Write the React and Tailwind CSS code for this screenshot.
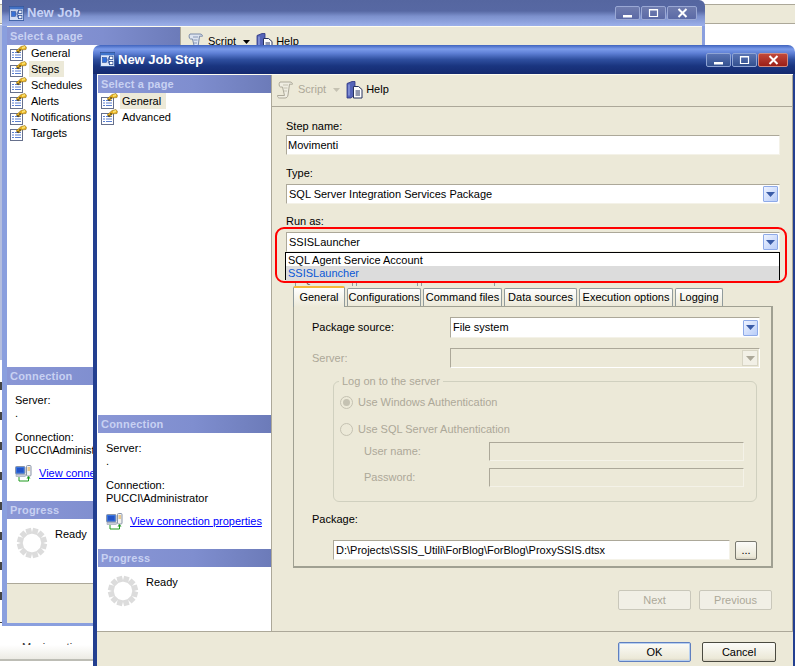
function PageIcon() {
  return (
    <svg width="17" height="16" viewBox="0 0 17 16" className="shrink-0">
      <rect x="0.5" y="4.5" width="12" height="11" fill="#fff" stroke="#66708c" />
      <path d="M2 7.5h2M5 7.5h6M2 10h2M5 10h6M2 12.5h2M5 12.5h6" stroke="#5a7fd0" />
      <path d="M6 6 L11 1.5 L15 0.5 L16.5 2.5 L16 4.5 L11 5 L9 8 Z" fill="#e8b020" stroke="#8a6a10" strokeWidth="0.5" />
      <path d="M7 7l1-1 1 1-1 1zM9 5l1-1 1 1-1 1z" fill="#222" />
      <path d="M12 2l3-1v2l-3 1z" fill="#f8e070" />
    </svg>
  );
}

function WindowIcon({ dim }) {
  return (
    <svg width="15" height="15" viewBox="0 0 18 16" preserveAspectRatio="none" className="shrink-0" opacity={dim ? 0.85 : 1}>
      <rect x="0.5" y="0.5" width="17" height="15" fill="#dfe8fa" stroke="#31569c" />
      <rect x="1" y="1" width="16" height="2.5" fill="#3f74cc" />
      <rect x="3" y="6" width="5" height="5" fill="#2f6fdc" stroke="#1b3f8c" strokeWidth="0.6" />
      <rect x="11.5" y="4.5" width="4" height="3.5" fill="#fff" stroke="#1b3f8c" strokeWidth="0.8" />
      <rect x="11.5" y="10" width="4" height="3.5" fill="#fff" stroke="#1b3f8c" strokeWidth="0.8" />
      <path d="M8 8.5h2V6.2h1.5M10 8.5v3.3h1.5" fill="none" stroke="#1b3f8c" strokeWidth="0.8" />
    </svg>
  );
}

function ScrollIcon({ disabled }) {
  return (
    <svg width="17" height="18" viewBox="0 0 17 18" className="shrink-0">
      <path d="M3 1h10c1.5 0 2.5 1 2.5 2.2H12.5L11 14c-.2 2-1.5 3-3 3H2.5C1 17 .5 15.8 .5 14.5H7.5L5.5 6H3.5C2 6 1.5 2 3 1z"
        fill={disabled ? "#efede2" : "#dde4f0"} stroke={disabled ? "#aca899" : "#7a8aa8"} strokeWidth="1" />
      <path d="M6 4h5M6.5 7h4M7 10h3" stroke={disabled ? "#c5c2b2" : "#8a9ab8"} />
    </svg>
  );
}

function HelpIcon() {
  return (
    <svg width="17" height="18" viewBox="0 0 17 18" className="shrink-0">
      <path d="M1 2.5L6 .5h3v13l-4 3.5H1z" fill="#5564b8" stroke="#2b3380" strokeWidth="0.8" />
      <path d="M3 3.5v11" stroke="#a5b2ec" />
      <path d="M7.5 5.5h5l3.5 3V17H7.5z" fill="#fff" stroke="#27335f" />
      <path d="M9.5 10h4.5M9.5 12h4.5M9.5 14h4.5" stroke="#27335f" />
    </svg>
  );
}

function ConnIcon() {
  return (
    <svg width="17" height="17" viewBox="0 0 17 17" className="shrink-0">
      <rect x="0.5" y="1.5" width="9.5" height="7.5" rx="1" fill="#3a76e0" stroke="#8a94a8" />
      <rect x="2" y="3" width="6.5" height="4.5" fill="#2354c8" />
      <rect x="1" y="9.5" width="9.5" height="2" fill="#c8ccd6" stroke="#8a94a8" strokeWidth="0.5" />
      <rect x="11.5" y="0.5" width="4.5" height="10.5" rx="1" fill="#f2f2f0" stroke="#8a94a8" />
      <path d="M12.5 3h2.5M12.5 5h2.5" stroke="#e0a030" />
      <path d="M4 12v4h9.5v-3" fill="none" stroke="#1f9a1f" />
      <path d="M11.5 13.5h4L13.5 11z" fill="#1f9a1f" />
    </svg>
  );
}

function Spinner() {
  const segs = Array.from({ length: 12 }, (_, i) => i);
  return (
    <svg width="32" height="32" viewBox="-16 -16 32 32" className="shrink-0">
      {segs.map((i) => (
        <rect key={i} x="-2.8" y="-15" width="5.6" height="6" fill="#dcdcdc" transform={`rotate(${i * 30 + 15})`} />
      ))}
    </svg>
  );
}

function TitleButton({ kind, dim }) {
  const w = kind === "close" ? "w-[30px]" : "w-[25px]";
  const bg = kind === "close"
    ? dim
      ? "bg-[linear-gradient(180deg,#6f7cae,#5b6aa6)] border-[#9aa8d4]"
      : "bg-[linear-gradient(180deg,#c2483a,#9c1f18)] border-[#d08a80]"
    : dim
      ? "bg-[linear-gradient(180deg,#6f7cae,#5b6aa6)] border-[#9aa8d4]"
      : "bg-[linear-gradient(180deg,#5a74b4,#33508f)] border-[#8fa4d4]";
  return (
    <div className={`${w} h-[14px] border rounded-[2px] flex items-center justify-center ${bg}`}>
      <svg width="11" height="10" viewBox="0 0 11 10">
        {kind === "min" && <rect x="1" y="7" width="9" height="2.5" fill="#fff" />}
        {kind === "max" && <path d="M1.5 1.5h8v7h-8z M1 2h9" fill="none" stroke="#fff" strokeWidth="1.2" />}
        {kind === "close" && <path d="M1.5 1l8 8M9.5 1l-8 8" stroke="#fff" strokeWidth="2" />}
      </svg>
    </div>
  );
}

function TitleBar({ title, dim }) {
  return (
    <div
      className={
        dim
          ? "h-[26px] shrink-0 flex items-center pl-[7px] pr-[8px] bg-[linear-gradient(180deg,#5566a0_0%,#5768a3_42%,#7c90cc_62%,#9cb0ea_100%)]"
          : "h-[29px] shrink-0 flex items-center pl-[7px] pr-[7px] bg-[linear-gradient(180deg,#3f63bd_0%,#7b9bea_14%,#5f80d6_28%,#2f4f9f_50%,#1a3580_72%,#14296f_100%)]"
      }
    >
      <WindowIcon dim={dim} />
      <span className={`ml-[3px] text-[13px] font-bold ${dim ? "text-[#c6d2f6]" : "text-white"}`}>{title}</span>
      <div className="ml-auto flex gap-px">
        <TitleButton kind="min" dim={dim} />
        <TitleButton kind="max" dim={dim} />
        <TitleButton kind="close" dim={dim} />
      </div>
    </div>
  );
}

function SideHeader({ children }) {
  return (
    <div className="h-[18px] shrink-0 flex items-center pl-[3px] text-[11px] font-bold tracking-[0.2px] text-[#c8d1f2] bg-[linear-gradient(90deg,#8a97d6_0%,#7f8ecf_55%,#6c7bb9_100%)]">
      {children}
    </div>
  );
}

function SidePanel({ pages, selected, frame }) {
  return (
    <div className={`shrink-0 flex flex-col bg-white border-r border-[#aca899] overflow-hidden ${frame}`}>
      <SideHeader>Select a page</SideHeader>
      <div className="flex-1">
        {pages.map((p) => (
          <div key={p} className="h-4 flex items-center pl-[3px]">
            <PageIcon />
            <span className={`ml-[2px] pl-[2px] pr-[5px] h-4 leading-4 whitespace-nowrap ${p === selected ? "bg-[#ece9d8]" : ""}`}>{p}</span>
          </div>
        ))}
      </div>
      <SideHeader>Connection</SideHeader>
      <div className="h-[116px] shrink-0 pt-[9px] pl-2 leading-[13px] whitespace-nowrap">
        <div>Server:</div>
        <div>.</div>
        <div className="mt-[11px]">Connection:</div>
        <div>PUCCI\Administrator</div>
        <div className="mt-[8px] flex items-center">
          <ConnIcon />
          <span className="ml-[7px] text-[#0000ff] underline">View connection properties</span>
        </div>
      </div>
      <SideHeader>Progress</SideHeader>
      <div className="h-[64px] shrink-0 flex pl-[9px] pt-[8px]">
        <Spinner />
        <span className="ml-[7px] mt-[1px] leading-[13px]">Ready</span>
      </div>
    </div>
  );
}

function Toolbar({ disabled, pl }) {
  return (
    <div className={`h-[32px] pb-[2px] shrink-0 flex items-center border-b border-[#aca899] ${pl}`}>
      <ScrollIcon disabled={disabled} />
      <span className={`ml-[4px] ${disabled ? "text-[#aca899]" : "text-black"}`}>Script</span>
      <svg width="7" height="4" viewBox="0 0 7 4" className="ml-[7px]">
        <path d="M0 0h7L3.5 4z" fill={disabled ? "#c5c2b2" : "#000"} />
      </svg>
      <span className="ml-[6px]"><HelpIcon /></span>
      <span className="ml-[3px]">Help</span>
    </div>
  );
}

const INPUT = "border border-[#f4f2e8] border-t-[#aca899] border-l-[#aca899]";

function Combo({ text, w, h, disabled }) {
  return (
    <div className={`${w} ${h} ${INPUT} ${disabled ? "bg-[#ece9d8] border-white" : "bg-white"} flex items-center pl-[2px] pr-[1px]`}>
      <span className="flex-1 whitespace-nowrap overflow-hidden">{text}</span>
      <div
        className={
          disabled
            ? "w-[16px] h-[16px] flex items-center justify-center bg-[#f2f0e6] border border-[#d8d5c5]"
            : "w-[15px] h-[16px] flex items-center justify-center bg-[linear-gradient(135deg,#eef3ff,#b9cdf8)] border border-[#8eaae8] rounded-[1px]"
        }
      >
        <svg width="9" height="5" viewBox="0 0 9 5">
          <path d="M0 0h9L4.5 5z" fill={disabled ? "#aca899" : "#3a5ca8"} />
        </svg>
      </div>
    </div>
  );
}

function Tab({ children, active, w }) {
  return (
    <div
      className={
        active
          ? `${w} h-[21px] -mb-px z-10 flex items-center justify-center rounded-t-[2px] border-x border-[#919b9c] border-t-2 border-t-[#f6b93a] bg-[linear-gradient(180deg,#ffffff,#ece9d8)] whitespace-nowrap`
          : `${w} h-[18px] flex items-center justify-center rounded-t-[2px] border border-b-0 border-[#919b9c] bg-[linear-gradient(180deg,#ffffff,#ece9d8)] whitespace-nowrap`
      }
    >
      {children}
    </div>
  );
}

function GhostTab({ children, w }) {
  return (
    <div className={`${w} h-[6px] border-x border-[#919b9c] flex items-end justify-center overflow-hidden whitespace-nowrap`}>
      <span className="leading-[13px] shrink-0">{children}</span>
    </div>
  );
}

function Radio({ checked }) {
  return (
    <div className="w-[13px] h-[13px] rounded-full border border-[#c5c2b2] bg-[#ece9d8] flex items-center justify-center shrink-0">
      {checked && <div className="w-[7px] h-[7px] rounded-full bg-[#c5c2b2]" />}
    </div>
  );
}

function XpButton({ children, w, disabled, isDefault }) {
  const cls = disabled
    ? "border-[#c9c7ba] text-[#aca899] bg-[#f1efe6]"
    : isDefault
      ? "border-[#5f7fc0] shadow-[inset_0_0_0_1px_#b8d0f0] bg-[linear-gradient(180deg,#fbfbf8,#ece9d8_85%,#d6d0c0)]"
      : "border-[#4a4a40] bg-[linear-gradient(180deg,#fbfbf8,#ece9d8_85%,#d6d0c0)]";
  return <div className={`${w} h-[20px] rounded-[2px] border flex items-center justify-center ${cls}`}>{children}</div>;
}

function TabPanel() {
  return (
    <div className="ml-[21px] w-[480px] h-[262px] border border-[#a0a092] border-r-2 border-b-2 pt-[10px] pl-[18px]">
      <div className="flex items-center">
        <span className="w-[138px]">Package source:</span>
        <Combo text="File system" w="w-[310px]" h="h-[21px]" />
      </div>
      <div className="mt-[10px] flex items-center text-[#aca899]">
        <span className="w-[138px]">Server:</span>
        <Combo text="" w="w-[310px]" h="h-[20px]" disabled />
      </div>
      <fieldset className="mt-[7px] ml-[21px] w-[424px] h-[127px] rounded-[6px] border border-[#d0d0bf] pl-[6px] text-[#aca899]">
        <legend className="ml-[-1px] px-[3px] leading-[13px]">Log on to the server</legend>
        <div className="mt-[7px] flex items-center gap-[5px] h-[14px]">
          <Radio checked />
          <span>Use Windows Authentication</span>
        </div>
        <div className="mt-[13px] flex items-center gap-[5px] h-[14px]">
          <Radio />
          <span>Use SQL Server Authentication</span>
        </div>
        <div className="mt-[6px] ml-[24px] flex items-center">
          <span className="w-[125px]">User name:</span>
          <div className={`w-[255px] h-[19px] ${INPUT}`} />
        </div>
        <div className="mt-[7px] ml-[24px] flex items-center">
          <span className="w-[125px]">Password:</span>
          <div className={`w-[255px] h-[19px] ${INPUT}`} />
        </div>
      </fieldset>
      <div className="mt-[11px] leading-[13px]">Package:</div>
      <div className="mt-[14px] ml-[21px] flex items-center">
        <div className={`w-[397px] h-[20px] bg-white pl-[2px] flex items-center whitespace-nowrap ${INPUT}`}>
          D:\Projects\SSIS_Utili\ForBlog\ForBlog\ProxySSIS.dtsx
        </div>
        <div className="ml-[5px] w-[22px] h-[19px] rounded-[2px] border border-[#7a7a70] bg-[linear-gradient(180deg,#fbfbf8,#ece9d8_85%,#d6d0c0)] flex items-center justify-center leading-none">...</div>
      </div>
    </div>
  );
}

function StepContent() {
  return (
    <div className="flex-1 flex flex-col min-w-0 border-r border-[#aca899]">
      <Toolbar disabled pl="pl-[5px]" />
      <div className="pl-[14px]">
        <div className="mt-[13px] leading-[13px]">Step name:</div>
        <div className={`mt-[2px] w-[494px] h-[20px] bg-white pl-[1px] flex items-center ${INPUT}`}>Movimenti</div>
        <div className="mt-[12px] leading-[13px]">Type:</div>
        <div className="mt-[4px]">
          <Combo text="SQL Server Integration Services Package" w="w-[494px]" h="h-[20px]" />
        </div>
        <div className="mt-[11px] leading-[13px]">Run as:</div>
        <div className="mt-[4px] relative w-[494px]">
          <Combo text="SSISLauncher" w="w-[494px]" h="h-[20px]" />
          <div className="absolute left-[9px] top-[48px] flex gap-[3px] text-[#555]">
            <GhostTab w="w-[58px]">SQL Server</GhostTab>
            <GhostTab w="w-[62px]">Execution</GhostTab>
            <GhostTab w="w-[74px]">Command line</GhostTab>
          </div>
          <div className="absolute z-20 left-[-1px] top-[20px] w-[495px] h-[28px] border border-black bg-white leading-[15px] flex flex-col">
            <div className="h-[13px] pl-[2px]">SQL Agent Service Account</div>
            <div className="flex-1 pl-[2px] bg-[#dcdcdc] text-[#0a58d6]">SSISLauncher</div>
          </div>
          <div className="absolute z-30 left-[-11px] top-[-5px] w-[512px] h-[56px] border-2 border-[#ff0000] rounded-[9px] pointer-events-none" />
        </div>
      </div>
      <div className="mt-[34px] ml-[21px] flex items-end gap-[2px]">
        <Tab active w="w-[52px]">General</Tab>
        <Tab w="w-[74px]">Configurations</Tab>
        <Tab w="w-[79px]">Command files</Tab>
        <Tab w="w-[73px]">Data sources</Tab>
        <Tab w="w-[94px]">Execution options</Tab>
        <Tab w="w-[48px]">Logging</Tab>
      </div>
      <TabPanel />
      <div className="mt-[22px] ml-[346px] flex gap-[8px]">
        <XpButton w="w-[73px]" disabled>Next</XpButton>
        <XpButton w="w-[73px]" disabled>Previous</XpButton>
      </div>
    </div>
  );
}

export default function App() {
  return (
    <div className="relative w-[795px] h-[666px] overflow-hidden bg-white text-[11px] text-black [font-family:Liberation_Sans,Arial,sans-serif]">
      {/* desktop behind the windows */}
      <div className="mt-[4px] h-[20px] border-y border-[#aca899] bg-[#ece9d8]" />
      <div className="mt-[1px] w-[2px] h-[335px] bg-[#b4bede]" />
      <div className="w-[2px] h-[263px] bg-[repeating-linear-gradient(180deg,#ffffff_0_22px,#444444_22px_30px)]" />
      <div className="mt-[20px] h-[2px] pl-[22px] overflow-hidden whitespace-nowrap text-[#333]">
        <div className="-mt-[2px] leading-[13px]">Movimenti</div>
      </div>
      <div className="h-[16px] border-b-2 border-[#bdbdb5] bg-[linear-gradient(180deg,#ffffff,#ecebe4)]" />

      {/* New Job */}
      <div className="absolute left-[2px] top-0 w-[703px] h-[626px] flex flex-col rounded-tr-[6px] overflow-hidden">
        <TitleBar title="New Job" dim />
        <div className="flex-1 flex flex-col min-h-0 border-l-[5px] border-r-[3px] border-b-[3px] border-[#8a9fde]">
          <div className="flex-1 flex min-h-0 border-t border-[#fffdf0] bg-[#ece9d8]">
            <SidePanel pages={["General", "Steps", "Schedules", "Alerts", "Notifications", "Targets"]} selected="Steps" frame="w-[174px]" />
            <div className="flex-1 min-w-0">
              <Toolbar pl="pl-[6px]" />
            </div>
          </div>
          <div className="h-[40px] shrink-0 bg-[#ece9d8] border-t border-[#aca899]" />
        </div>
      </div>

      {/* New Job Step */}
      <div className="absolute left-[93px] top-[45px] w-[702px] h-[621px] flex flex-col rounded-t-[7px] overflow-hidden">
        <TitleBar title="New Job Step" />
        <div className="flex-1 flex flex-col min-h-0 border-l-4 border-r-2 border-[#233f90]">
          <div className="flex-1 flex min-h-0 border-t border-[#fffdf0] bg-[#ece9d8]">
            <SidePanel pages={["General", "Advanced"]} selected="General" frame="w-[175px] pl-px" />
            <StepContent />
          </div>
          <div className="h-[35px] shrink-0 bg-[#ece9d8] border-t border-[#aca899] pt-[10px] pr-[17px] flex justify-end gap-[11px]">
            <XpButton w="w-[73px]" isDefault>OK</XpButton>
            <XpButton w="w-[74px]">Cancel</XpButton>
          </div>
        </div>
      </div>
    </div>
  );
}
